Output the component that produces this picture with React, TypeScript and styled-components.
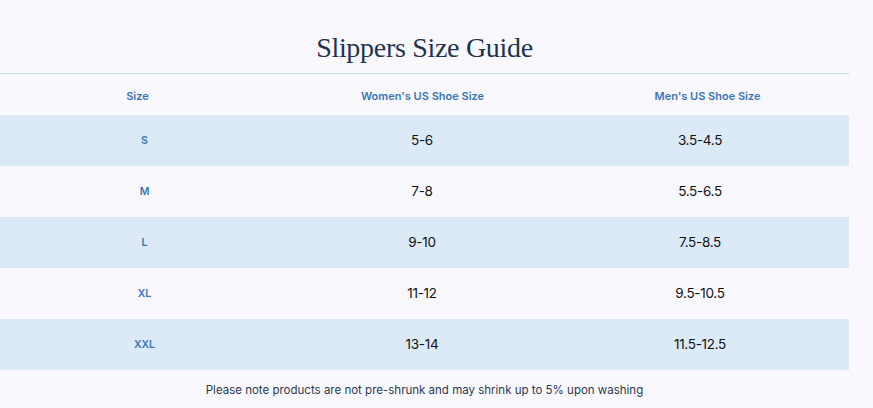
import React from "react";
import styled, { createGlobalStyle } from "styled-components";

const Global = createGlobalStyle`
  html, body { margin: 0; padding: 0; background: #f9f8fe; }
  body { font-family: "Inter", "Noto Sans", sans-serif; }
`;

const Page = styled.div`
  width: 873px;
  height: 408px;
  background: #f9f8fe;
  box-sizing: border-box;
  padding-top: 30px;
`;

const Title = styled.h1`
  margin: 0;
  width: 849px;
  text-align: center;
  font-family: "Liberation Serif", "DejaVu Serif", serif;
  font-weight: 400;
  font-size: 28px;
  line-height: 36px;
  color: #1d3350;
  letter-spacing: -0.3px;
  height: 43px;
`;

const Table = styled.table`
  width: 849px;
  border-collapse: collapse;
  table-layout: fixed;
  border-top: 1px solid #c6d6e6;
`;

const HeadCell = styled.th<{ $pr?: number }>`
  box-sizing: border-box;
  height: 41px;
  padding: 4px ${(p) => p.$pr ?? 0}px 0 0;
  text-align: center;
  font-family: "Inter", "Noto Sans", sans-serif;
  font-weight: 600;
  font-size: 11px;
  color: #3a76b6;
  vertical-align: middle;
`;

const Row = styled.tr<{ $alt: boolean }>`
  background: ${(p) => (p.$alt ? "#dce9f6" : "#f9f8fe")};
`;

const SizeCell = styled.td`
  height: 51px;
  padding: 0 0 0 6px;
  text-align: center;
  font-family: "Inter", "Noto Sans", sans-serif;
  font-weight: 600;
  font-size: 10.5px;
  color: #3a76b6;
`;

const ValueCell = styled.td<{ $pr?: number }>`
  height: 51px;
  padding: 0 ${(p) => p.$pr ?? 0}px 0 0;
  text-align: center;
  font-family: "Inter", "Noto Sans", sans-serif;
  font-weight: 400;
  font-size: 13.5px;
  letter-spacing: -0.3px;
  color: #111;
`;

const Note = styled.p`
  margin: 0;
  width: 849px;
  text-align: center;
  font-family: "Inter", "Noto Sans", sans-serif;
  font-size: 11.5px;
  color: #2b3a4c;
  padding-top: 13px;
`;

const rows = [
  ["S", "5-6", "3.5-4.5"],
  ["M", "7-8", "5.5-6.5"],
  ["L", "9-10", "7.5-8.5"],
  ["XL", "11-12", "9.5-10.5"],
  ["XXL", "13-14", "11.5-12.5"],
];

export default function App() {
  return (
    <Page>
      <Global />
      <Title>Slippers Size Guide</Title>
      <Table>
        <thead>
          <tr>
            <HeadCell $pr={8}>Size</HeadCell>
            <HeadCell $pr={4}>Women's US Shoe Size</HeadCell>
            <HeadCell>Men's US Shoe Size</HeadCell>
          </tr>
        </thead>
        <tbody>
          {rows.map((r, i) => (
            <Row key={r[0]} $alt={i % 2 === 0}>
              <SizeCell>{r[0]}</SizeCell>
              <ValueCell $pr={5}>{r[1]}</ValueCell>
              <ValueCell $pr={15}>{r[2]}</ValueCell>
            </Row>
          ))}
        </tbody>
      </Table>
      <Note>Please note products are not pre-shrunk and may shrink up to 5% upon washing</Note>
    </Page>
  );
}
